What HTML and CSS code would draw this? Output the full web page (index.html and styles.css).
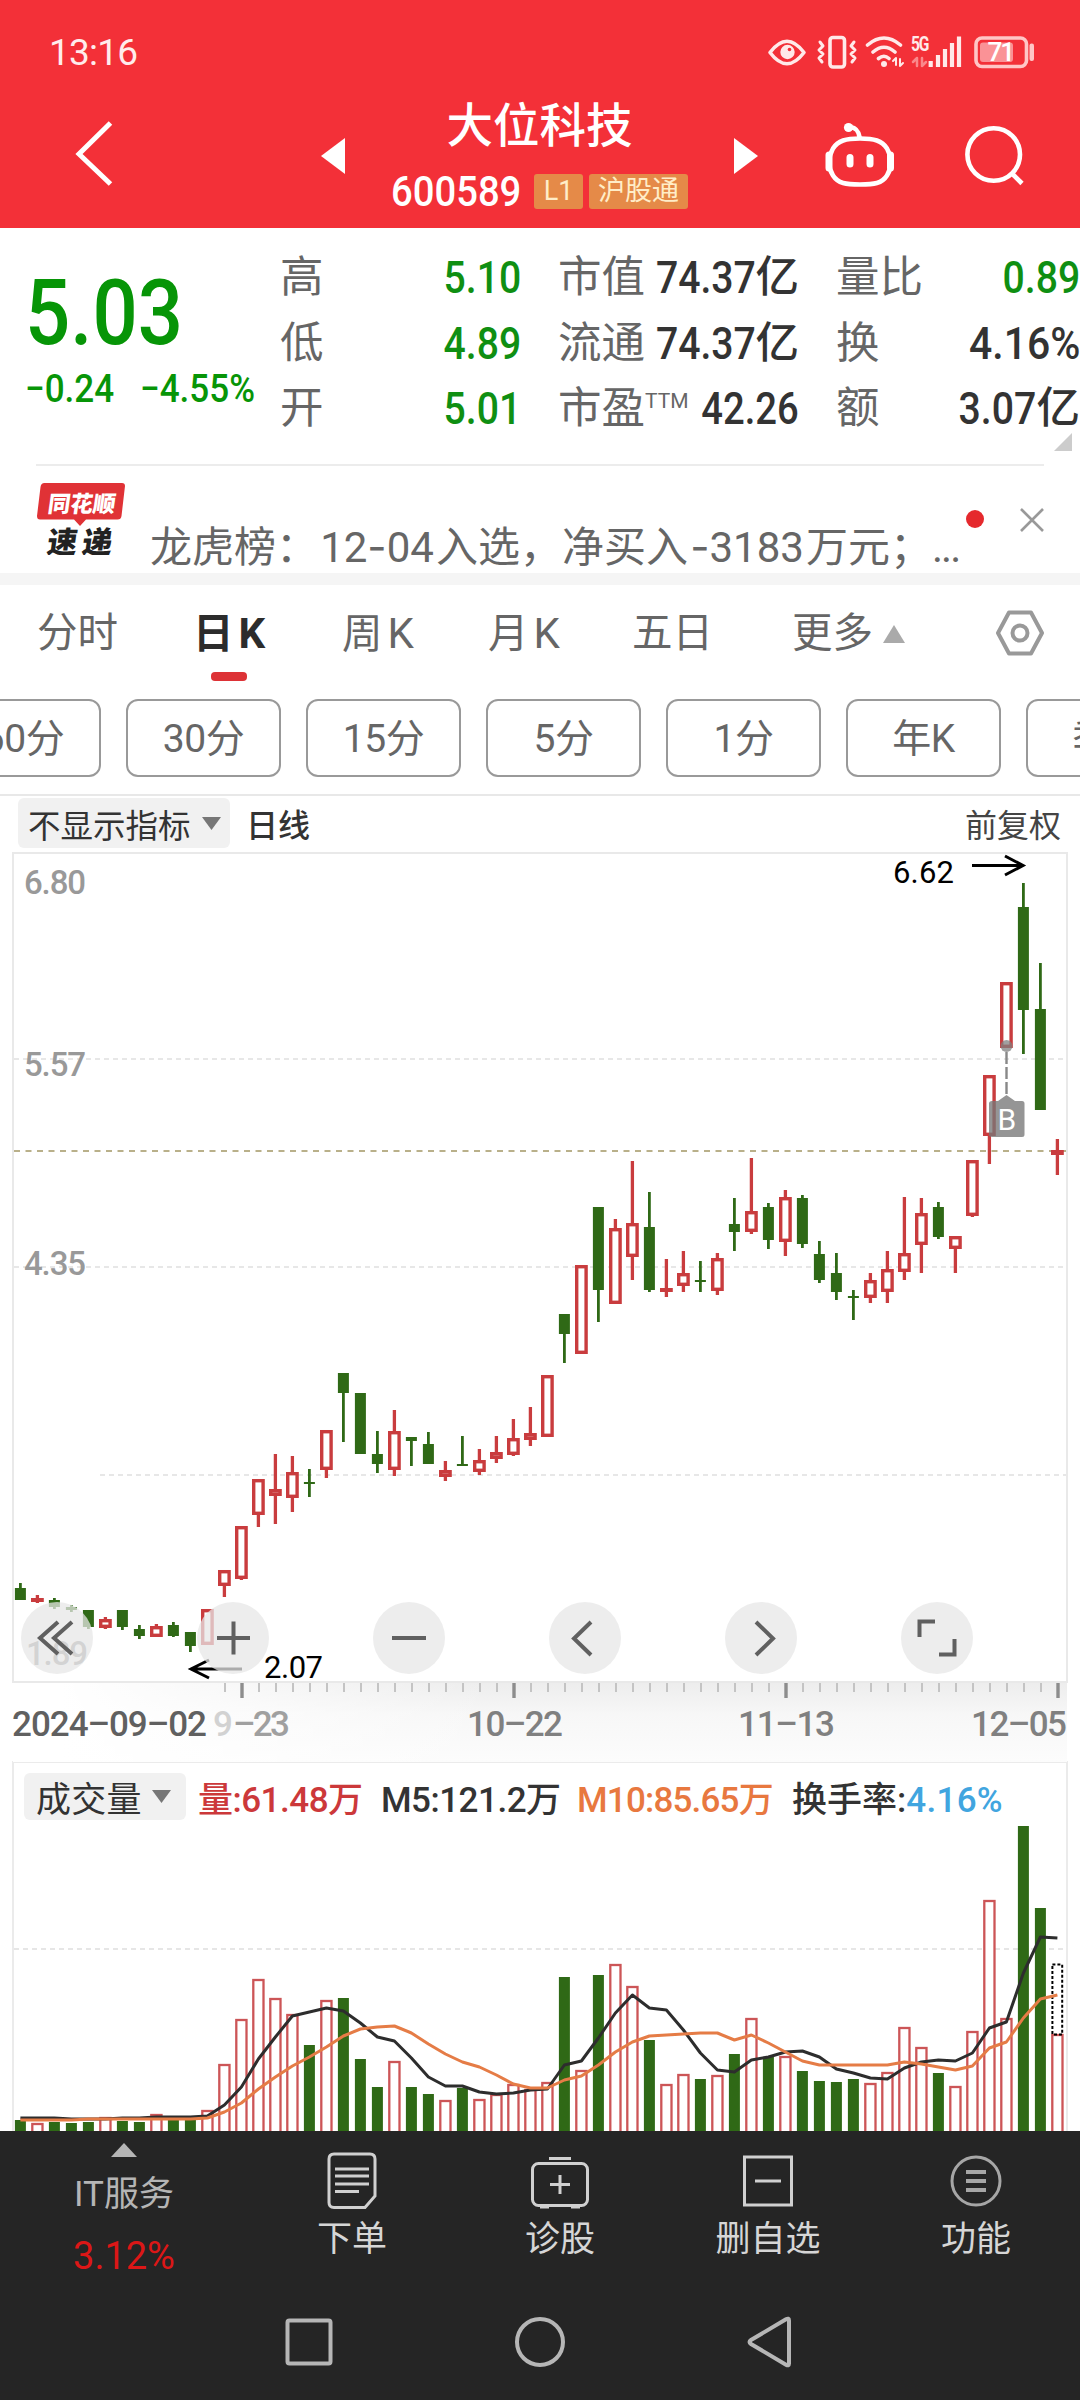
FILE: index.html
```html
<!DOCTYPE html>
<html lang="zh-CN">
<head>
<meta charset="utf-8">
<title>大位科技 600589</title>
<link rel="stylesheet" href="styles.css">
</head>
<body>
<header class="top">
  <div class="status">
    <span class="clock">13:16</span>
    <svg class="status-icons" width="300" height="44" viewBox="760 30 300 44" fill="none" stroke="#ffe9e9" stroke-width="3.6" stroke-linecap="round" stroke-linejoin="round">
      <path d="M770 52.500Q787 30 804 52.500Q787 75 770 52.500Z"/>
      <circle cx="787.500" cy="52" r="7.200" fill="#ffe9e9" stroke="none"/><circle cx="789.500" cy="49.500" r="1.800" fill="#f33038" stroke="none"/>
      <rect x="830" y="37.500" width="14.500" height="29.500" rx="3"/>
      <path stroke-width="3" d="M820 42l3 4-4 4 4 4-4 4 3 4M854 42l-3 4 4 4-4 4 4 4-3 4"/>
      <path d="M867.500 45Q884 31 900.500 45M873 52Q884 42.500 895 52M878.500 58.500Q884 54 889 58.500"/>
      <circle cx="884" cy="64" r="3" fill="#ffe9e9" stroke="none"/>
      <path d="M896 58v7m-3-4 3-3M900 66v-7m3 4-3 3" stroke-width="2"/>
      <path d="M917 58v8m-4-4 4-4M922 66v-8m4 4-4 4" stroke-width="2.500" stroke="#f9888b"/>
      <text x="911" y="51" class="net">5G</text>
      <path stroke-width="4.200" stroke-linecap="butt" d="M930.700 67v-6M938 67V55M945 67V49M952 67V43M959 67V36.500"/>
      <rect x="976" y="38" width="50.500" height="28.500" rx="6" stroke="#ffc6c6"/>
      <rect x="980" y="42.500" width="33" height="19.500" rx="3" fill="#fa9296" stroke="none"/>
      <rect x="1029.500" y="43.500" width="4.500" height="17.500" rx="2" fill="#ffc6c6" stroke="none"/>
      <text x="987.500" y="61.200" class="battery">71</text>
    </svg>
  </div>
  <div class="titlebar">
    <svg width="60" height="80" viewBox="64 114 60 80" fill="none" stroke="#fff" stroke-width="5"><path d="M110.500 123 79 154 110.500 184"/></svg>
    <svg class="prev" width="24" height="36" viewBox="0 0 24 36" fill="#fff"><path d="M24 0v36L0 18z"/></svg>
    <div class="name">
      <h1>大位科技</h1>
      <div class="code"><span class="code-num">600589</span><span class="tag">L1</span><span class="tag wide">沪股通</span></div>
    </div>
    <svg class="next" width="24" height="36" viewBox="0 0 24 36" fill="#fff"><path d="M0 0v36l24-18z"/></svg>
    <svg class="actions" width="220" height="80" viewBox="820 114 220 80" fill="none" stroke="#fff" stroke-width="4.600" stroke-linecap="round">
      <path d="M861 138.500c14 0 22 2 27 10 5 9 5 19 0 27-5 8-13 9-27 9s-22-1-27-9c-5-8-5-18 0-27 5-8 13-10 27-10Z"/>
      <path d="M860.500 137c-1-6-3-9-9-10"/><circle cx="849.500" cy="127.500" r="4.600" fill="#fff" stroke="none"/>
      <path d="M830 155v13M891.500 155v13" stroke-width="7"/>
      <path d="M851 157.500v6.500M871 157.500v6.500" stroke-width="7"/>
      <circle cx="994.700" cy="154.500" r="26.300"/><path d="M1013 173.500l10 10" stroke-linecap="butt"/>
    </svg>
  </div>
</header>

<section class="quote">
  <div class="last">
    <strong>5.03</strong>
    <div class="change"><span>−0.24</span><span>−4.55%</span></div>
  </div>
  <dl class="stats">
    <dt>高</dt><dd class="down"><i>5.10</i></dd><dt>市值</dt><dd><i>74.37</i>亿</dd><dt>量比</dt><dd class="down"><i>0.89</i></dd>
    <dt>低</dt><dd class="down"><i>4.89</i></dd><dt>流通</dt><dd><i>74.37</i>亿</dd><dt>换</dt><dd><i class="pct">4.16%</i></dd>
    <dt>开</dt><dd class="down"><i>5.01</i></dd><dt>市盈<sup>TTM</sup></dt><dd><i class="pe">42.26</i></dd><dt>额</dt><dd><i>3.07</i>亿</dd>
  </dl>
  <span class="corner"></span>
</section>

<section class="news">
  <svg width="94" height="74" viewBox="34 481 94 74">
    <path d="M44.500 483H122q3 0 3 3l-3.500 30q-.5 3.500-4 3.500H86L80 526l-6-6.500H40q-3 0-3-3.500l3.500-29q.5-4 4-4Z" fill="#e03236"/>
    <text class="logo-a" transform="translate(47 511.500) skewX(-8)">同花顺</text>
    <text class="logo-b" transform="translate(46 552.500) skewX(-8)">速</text>
    <text class="logo-b" transform="translate(81 552.500) skewX(-8)">递</text>
  </svg>
  <p>龙虎榜：<span class="lat">12<b>-</b>04</span>入选，净买入<span class="lat neg"><b>-</b>3183</span>万元；<span class="dots">...</span></p>
  <span class="dot"></span>
  <svg class="close" width="24" height="24" viewBox="0 0 24 24" stroke="#999" stroke-width="2.600"><path d="M1 1l22 22M23 1 1 23"/></svg>
</section>

<nav class="tabs">
  <span>分时</span><span class="on">日<em>K</em></span><span>周<em>K</em></span><span>月<em>K</em></span><span>五日</span>
  <span class="more">更多<svg width="22" height="18" viewBox="0 0 22 18" fill="#aaa"><path d="M11 0 22 18H0z"/></svg></span>
  <svg class="gear" width="50" height="48" viewBox="0 0 50 48" fill="none" stroke="#999" stroke-width="4" stroke-linejoin="round"><path d="M14 3.500h22L47 24 36 44.500H14L3 24Z"/><circle cx="25" cy="24" r="7.500"/></svg>
</nav>

<div class="periods">
  <span>60分</span><span>30分</span><span>15分</span><span>5分</span><span>1分</span><span>年K</span><span>季K</span>
</div>

<div class="toolbar">
  <span class="chip">不显示指标<svg width="19" height="13" viewBox="0 0 19 13" fill="#777"><path d="M0 0h19L9.500 13z"/></svg></span>
  <span class="line">日线</span>
  <span class="adjust">前复权</span>
</div>

<section class="price">
  <svg id="candles" width="1080" height="912" viewBox="0 850 1080 912">
    <defs>
      <linearGradient id="axisFade" x1="0" x2="0" y1="0" y2="1"><stop offset="0" stop-color="#ededed"/><stop offset=".4" stop-color="#f7f7f7"/><stop offset="1" stop-color="#fcfcfc"/></linearGradient>
      <linearGradient id="axisLeft" x1="0" x2="1" y1="0" y2="0"><stop offset="0" stop-color="#fff"/><stop offset=".1" stop-color="#fff"/><stop offset="1" stop-color="#fff" stop-opacity="0"/></linearGradient>
    </defs>
    <rect x="13" y="1683" width="1054" height="79" fill="url(#axisFade)"/>
    <rect x="13" y="1683" width="480" height="79" fill="url(#axisLeft)"/>
    <rect x="13" y="853" width="1054" height="829" fill="none" stroke="#e9e9e9" stroke-width="2"/>
    <g stroke="#e0e0e0" stroke-width="1.500" stroke-dasharray="5 4"><path d="M14 1059H1066M14 1267H1066M100 1475H1066"/></g>
    <path d="M14 1151H1066" stroke="#b9b08a" stroke-width="2" stroke-dasharray="6 5.500"/>
    <g class="scale"><text x="24" y="894" textLength="62">6.80</text><text x="24" y="1076" textLength="62">5.57</text><text x="24" y="1275" textLength="62">4.35</text><text x="26" y="1665" textLength="62">1.89</text></g>
    <g id="ticks"></g>
    <g id="bodies"></g>
    <g stroke="#000" stroke-width="3" fill="none"><path d="M972 865.500h50M1005 856l18 9.500-18 9.500M242 1669h-50M209 1660l-18 9 18 9"/></g>
    <g class="mark"><text x="893" y="883" textLength="61">6.62</text><text x="264" y="1678" textLength="59">2.07</text></g>
    <circle cx="1006.500" cy="1046" r="6" fill="#808080" fill-opacity=".75"/>
    <path d="M1006.500 1052v44" stroke="#888" stroke-width="2.400" stroke-dasharray="12 3"/>
    <path d="M992 1101h6l8.500-6 8.500 6h7q2.500 0 2.500 2.500v31q0 2.500-2.500 2.500h-30q-3 0-3-2.500v-31q0-2.500 3-2.500Z" fill="#777" fill-opacity=".78"/>
    <text class="flag" x="997.500" y="1129.500">B</text>
    <g class="dates"><text x="12" y="1736" textLength="195">2024–09–02</text><text class="faded" x="213" y="1736">9</text><text x="233" y="1736" textLength="57" class="half">–23</text><text x="467" y="1736" textLength="96">10–22</text><text x="738" y="1736" textLength="97">11–13</text><text x="971" y="1736" textLength="96">12–05</text></g>
  </svg>
  <div class="controls">
    <button><svg viewBox="-36 -36 72 72"><path d="M1-16-17 0 1 16M15-16-3 0 15 16"/></svg></button>
    <button><svg viewBox="-36 -36 72 72"><path d="M-16 0h33M.500-16.500v33"/></svg></button>
    <button><svg viewBox="-36 -36 72 72"><path d="M-17 0h34"/></svg></button>
    <button><svg viewBox="-36 -36 72 72"><path d="M6-16-11 .500 6 17"/></svg></button>
    <button><svg viewBox="-36 -36 72 72"><path d="M-5-16 12 .500-5 17"/></svg></button>
    <button><svg viewBox="-36 -36 72 72"><path d="M-2-16.500h-15.500V-1M2 16.500h15.500V1"/></svg></button>
  </div>
</section>

<section class="volume">
  <div class="vol-head">
    <span class="chip">成交量<svg width="19" height="13" viewBox="0 0 19 13" fill="#777"><path d="M0 0h19L9.500 13z"/></svg></span>
    <span class="v">量:61.48万</span><span class="m5">M5:121.2万</span><span class="m10">M10:85.65万</span><span class="turn">换手率:<b>4.16%</b></span>
  </div>
  <svg id="volumes" width="1052" height="309" viewBox="14 1822 1052 309"></svg>
</section>

<footer class="bottom">
  <div class="actions-row">
    <div class="index"><svg width="26" height="14" viewBox="0 0 26 14" fill="#b5b5b5"><path d="M13 0 26 14H0z"/></svg><span>IT服务</span><span class="up">3.12%</span></div>
    <div class="act"><svg viewBox="-30 -30 60 60"><path d="M-18-27h36q5 0 5 5v37L13 26.500h-31q-5 0-5-5V-22q0-5 5-5Z"/><path d="M-17-12h34M-17-5h34M-17 3h34M-17 10.500H7"/></svg><span>下单</span></div>
    <div class="act"><svg viewBox="-30 -30 60 60"><rect x="-27.500" y="-17.500" width="55" height="42" rx="6"/><path d="M-11-22.500h22M-10 3.500h20M0-6v19M-20 26h9M11 26h9"/></svg><span>诊股</span></div>
    <div class="act"><svg viewBox="-30 -30 60 60"><rect x="-23.500" y="-24" width="47" height="48"/><path d="M-13 0h26"/></svg><span>删自选</span></div>
    <div class="act"><svg viewBox="-30 -30 60 60" class="dim"><circle r="24"/><path d="M-10-9h20M-10 0h20M-10 9h20" stroke-width="4"/></svg><span>功能</span></div>
  </div>
  <div class="sysnav">
    <svg viewBox="-30 -30 60 60"><rect x="-21.500" y="-21.500" width="43" height="43" rx="2"/></svg>
    <svg viewBox="-30 -30 60 60"><circle r="23"/></svg>
    <svg viewBox="-30 -30 60 60"><path d="M18-21.500v43q0 3-3 1.200L-20 2q-3-2 0-4L15-22.700q3-1.800 3 1.200Z"/></svg>
  </div>
</footer>
<script src="chart.js"></script>
</body>
</html>
```
FILE: styles.css
```css
* { box-sizing: border-box; }
body { margin: 0; width: 1080px; height: 2400px; overflow: hidden; background: #fff; color: #333; font-family: Roboto, "Noto Sans CJK SC", sans-serif; }
svg { display: block; flex: none; }
h1, p, dl, dt, dd { margin: 0; }

.top { height: 228px; background: #f33038; color: #fff; }
.status { height: 104px; padding: 0 20px 0 49px; display: flex; align-items: center; justify-content: space-between; }
.clock { font-size: 37px; letter-spacing: -.8px; color: #ffecec; }
.net { font: 700 20px Roboto, sans-serif; fill: #ffe9e9; stroke: none; letter-spacing: -1.5px; transform-box: fill-box; transform: scaleX(.78); }
.battery { font: 500 26px Roboto, sans-serif; fill: #fff; stroke: none; letter-spacing: -2px; }
.titlebar { display: flex; height: 124px; padding-left: 64px; }
.titlebar > svg:first-child { margin-top: 10px; }
.prev { margin: 34px 0 0 197px; }
.name { width: 389px; display: flex; flex-direction: column; align-items: center; }
.name h1 { font-size: 46.500px; line-height: 50px; font-weight: 500; margin-top: -3px; }
.code { display: flex; align-items: center; margin-top: 23px; height: 34px; }
.code-num { font-size: 42px; width: 136px; transform: scaleX(.91); transform-origin: left; font-weight: 500; margin-right: 7px; }
.tag { background: #e58a48; color: #ffedc8; border-radius: 3px; width: 49px; height: 35px; line-height: 35px; font-size: 27px; text-align: center; }
.tag.wide { width: 99px; margin-left: 6px; }
.next { margin: 34px 0 0 0; }
.actions { margin: 10px 0 0 61px; }

.quote { position: relative; display: flex; height: 238px; margin-bottom: -1px; }
.quote::after { content: ""; position: absolute; left: 36px; right: 36px; bottom: 0; height: 2px; background: #ececec; }
.last { width: 280px; padding-left: 25px; color: #079507; }
.last strong { display: block; font-weight: 500; font-size: 90px; line-height: 100px; margin-top: 36px; transform: scaleX(.885); transform-origin: left; }
.change { display: flex; font-size: 38.500px; line-height: 44px; font-weight: 500; margin-top: 3px; }
.change span { width: 115px; transform: scaleX(.91); transform-origin: left; white-space: nowrap; }
.stats { display: grid; grid-template-columns: 86px 155px 125px 153px 132px 149px; grid-auto-rows: 65.500px; padding-top: 17px; font-size: 43.500px; line-height: 65px; }
.stats dt { color: #666; white-space: nowrap; }
.stats dt:nth-of-type(3n+2), .stats dt:nth-of-type(3n) { margin-left: 37px; }
.stats dd { display: flex; justify-content: flex-end; color: #333; font-weight: 500; }
.stats i { font-style: normal; font-size: 45px; transform: scaleX(.87); transform-origin: right; }
.stats i.pct { transform: scaleX(.91); }
.stats i.pe { transform: scaleX(.85); }
.stats dd.down { color: #0f8f12; }
.stats sup { font-size: 21px; line-height: 0; vertical-align: 15px; }
.corner { position: absolute; right: 8px; top: 205px; border-left: 18px solid transparent; border-bottom: 18px solid #ccc; }

.news { height: 108px; padding: 16px 36px 0 34px; display: flex; }
.logo-a { font: 900 22.500px "Noto Sans CJK SC", sans-serif; fill: #fff; }
.logo-b { font: 900 30px "Noto Sans CJK SC", sans-serif; fill: #222; }
.news p { margin: 41px 0 0 22px; width: 812px; font-size: 42px; line-height: 52px; color: #666; white-space: nowrap; display: flex; }
.lat { display: inline-block; width: 118px; text-align: center; }
.lat b { font: 400 42px Inter, sans-serif; line-height: 1; }
.dots { letter-spacing: -2px; }
.dot { width: 18px; height: 18px; border-radius: 50%; background: #e5292d; margin: 29px 0 0 4px; }
.close { margin: 27px 0 0 36px; }

.tabs { height: 126px; border-top: 12px solid #f5f5f5; padding: 0 36px 0 37px; display: grid; grid-template-columns: 156px 149px 146px 144px 160px 203px 50px; color: #666; font-size: 40.500px; line-height: 97px; }
.tabs em { font-style: normal; font-size: 42px; margin-left: 5px; }
.tabs .on { position: relative; color: #2c2c2c; font-weight: 700; }
.tabs .on::after { content: ""; position: absolute; left: 18px; top: 87px; width: 36px; height: 9px; border-radius: 4px; background: #dd3236; }
.more { display: flex; align-items: center; height: 97px; gap: 10px; }
.gear { margin-top: 24px; }

.periods { display: flex; gap: 25px; padding-left: 0; justify-content: flex-start; width: 1080px; height: 97px; overflow: hidden; color: #666; font-size: 39px; border-bottom: 2px solid #e8e8e8; }
.periods span { width: 155px; height: 78px; line-height: 76px; border: 2px solid #999; border-radius: 12px; text-align: center; flex: none; letter-spacing: -.5px; }
.periods span:first-child { margin-left: -54px; }

.toolbar { height: 54px; display: flex; align-items: center; padding: 0 19px 0 18px; font-size: 32.500px; }
.chip { display: flex; align-items: center; background: #f1f1f1; border-radius: 6px; }
.toolbar .chip { height: 50px; width: 212px; padding-left: 10px; gap: 11px; }
.line { margin-left: 16px; font-size: 32px; font-weight: 500; }
.adjust { margin-left: auto; font-size: 32px; color: #444; }

.price { position: relative; height: 912px; }
.scale { font-size: 33px; fill: #999; font-weight: 500; }
.mark { font-size: 31px; fill: #000; }
.flag { font-size: 30px; fill: #fff; }
.dates { font-size: 35px; fill: #808080; font-weight: 500; }
.dates text:first-child { fill: #606060; }
.dates .faded { fill: #d2d2d2; }
.dates .half { fill: #a0a0a0; }
.controls { position: absolute; left: 21px; top: 752px; display: flex; gap: 104px; }
.controls button { width: 72px; height: 72px; padding: 0; border: 0; border-radius: 50%; background: rgba(231, 231, 231, .74); }
.controls svg { width: 72px; height: 72px; fill: none; stroke: #606060; stroke-width: 4; }

.volume { height: 370px; margin: -1px 12px 0; border: 2px solid #ebebeb; border-bottom: 0; }
.vol-head { height: 59px; padding: 10px 0 2px 10px; display: flex; align-items: center; font-size: 35px; white-space: nowrap; letter-spacing: -.5px; }
.vol-head span { flex: none; }
.vol-head .chip { width: 162px; height: 47px; padding-left: 12px; gap: 10px; letter-spacing: .3px; }
.v { width: 183px; margin-left: 12px; color: #cc383a; }
.m5 { width: 196px; }
.m10 { width: 215px; color: #e8783f; letter-spacing: -.8px; }
.turn { letter-spacing: 0; }
.turn b { color: #41a5df; letter-spacing: .3px; }
.v, .m5, .m10, .turn, .turn b { font-weight: 500; }

.bottom { height: 269px; background: #252525; color: #d6d6d6; }
.actions-row { height: 158px; display: grid; grid-template-columns: 248px repeat(4, 208px); font-size: 35px; }
.index { display: flex; flex-direction: column; align-items: center; padding-top: 12px; line-height: 50px; color: #b5b5b5; }
.index span { margin-top: 13px; }
.index .up { color: #dc1717; font-size: 38px; margin-top: 11px; }
.act { display: flex; flex-direction: column; align-items: center; padding-top: 20px; line-height: 50px; }
.act svg { width: 60px; height: 60px; fill: none; stroke: #d0d0d0; stroke-width: 3; }
.act svg.dim { stroke: #a6a6a6; }
.act span { margin-top: 4px; }
.sysnav { display: flex; padding: 23px 0 0 279px; gap: 171px; }
.sysnav svg { width: 60px; height: 60px; fill: none; stroke: #b6b6b6; stroke-width: 4; }
```
FILE: chart.js
```js
// Daily bars: direction, high, body top, body bottom, low, volume top (all in plot units).
const days = [
["g",1583,1588,1600,1600,2120],["r",1595,1598,1602,1603,2123],["g",1598,1600,1607,1609,2122],["g",1605,1607,1610,1612,2123],
["g",1610,1610,1627,1629,2122],["r",1617,1619,1628,1629,2117],["g",1610,1610,1627,1630,2121],["g",1625,1629,1636,1639,2122],
["r",1624,1626,1637,1637,2114],["g",1622,1625,1636,1637,2119],["g",1632,1632,1646,1652,2119],["r",1609,1609,1645,1645,2110],
["r",1570,1570,1586,1597,2064],["r",1526,1526,1579,1580,2019],["r",1479,1479,1515,1527,1979],["r",1454,1489,1496,1524,1998],
["r",1456,1472,1498,1512,2014],["g",1469,1482,1484,1497,2045],["r",1430,1430,1470,1478,2000],["g",1373,1373,1393,1442,1998],
["g",1393,1393,1454,1454,2059],["g",1431,1454,1464,1473,2087],["r",1410,1431,1470,1476,2061],["g",1437,1437,1441,1466,2087],
["g",1432,1444,1464,1464,2094],["r",1461,1470,1477,1481,2100],["g",1436,1464,1466,1466,2088],["r",1449,1460,1472,1475,2099],
["r",1436,1452,1459,1463,2094],["r",1419,1438,1455,1456,2084],["r",1407,1433,1440,1446,2089],["r",1375,1375,1437,1437,2082],
["g",1314,1314,1334,1363,1977],["r",1265,1265,1354,1354,2070],["g",1207,1207,1290,1322,1975],["r",1219,1228,1304,1304,1964],
["r",1161,1223,1257,1280,1986],["g",1192,1227,1290,1292,2040],["r",1259,1288,1292,1297,2084],["r",1251,1273,1286,1292,2074],
["g",1261,1280,1282,1292,2079],["r",1253,1258,1291,1295,2075],["g",1198,1224,1232,1251,2054],["r",1158,1211,1232,1234,2018],
["g",1203,1207,1240,1249,2057],["r",1190,1197,1242,1256,2056],["g",1195,1198,1244,1248,2071],["g",1241,1254,1280,1283,2081],
["g",1253,1273,1292,1300,2082],["g",1290,1296,1298,1320,2079],["r",1273,1280,1298,1303,2083],["r",1251,1269,1292,1303,2072],
["r",1197,1253,1272,1280,2027],["r",1198,1213,1245,1273,2047],["g",1202,1207,1237,1239,2073],["r",1236,1236,1249,1273,2086],
["r",1160,1160,1216,1217,2031],["r",1075,1075,1136,1164,1900],["r",982,982,1048,1048,2018],["g",883,907,1010,1054,1826],
["g",963,1009,1110,1110,1908],["r",1139,1150,1155,1175,2034]];
const ma5 = [2118,2118,2118,2119,2119,2119,2118,2118,2117,2117,2117,2116,2105,2087,2059,2037,2016,2012,2008,2011,2023,2037,2041,2058,2077,2086,2086,2092,2094,2093,2090,2089,2065,2061,2038,2013,1995,2008,2010,2030,2053,2070,2072,2060,2057,2052,2051,2057,2069,2073,2078,2079,2068,2062,2060,2061,2053,2028,2022,1973,1937,1938];
const ma10 = [2120,2120,2120,2120,2119,2119,2119,2119,2119,2119,2119,2118,2112,2103,2089,2077,2066,2057,2047,2036,2029,2027,2026,2033,2044,2054,2062,2067,2075,2084,2088,2088,2080,2076,2065,2052,2042,2036,2035,2034,2033,2033,2040,2035,2043,2052,2061,2065,2065,2065,2065,2065,2062,2064,2067,2070,2066,2048,2042,2018,1999,1995];

const X = i => 20.4 + 17 * i;
const UP = "#c93c3e", DOWN = "#2f6916";

document.getElementById("bodies").innerHTML = days.map(([d, hi, top, bot, lo], i) => {
  const x = X(i);
  if (d === "g")
    return `<path d="M${x} ${hi}V${lo}" stroke="${DOWN}" stroke-width="2.8"/><rect x="${x - 5.5}" y="${top}" width="11" height="${bot - top}" fill="${DOWN}"/>`;
  const h = Math.max(bot - top - 3.4, 0.5);
  return `<path d="M${x} ${hi}V${top + 1}M${x} ${bot - 1}V${lo}" stroke="${UP}" stroke-width="3.3"/><rect x="${x - 4.7}" y="${top + 1.7}" width="9.4" height="${h}" fill="#fff" stroke="${UP}" stroke-width="3.4"/>`;
}).join("");

document.getElementById("ticks").innerHTML = days.map((_, i) => {
  if (i < 12) return "";
  const major = (i - 13) % 16 === 0;
  return `<path d="M${X(i) + 0.6} 1683V${major ? 1698 : 1692}" stroke="${major ? "#8d8d8d" : "#c4c4c4"}" stroke-width="${major ? 3.4 : 2}"/>`;
}).join("");

const line = (ys, c) => `<polyline fill="none" stroke="${c}" stroke-width="3" stroke-linejoin="round" points="${ys.map((y, i) => X(i) + "," + y).join(" ")}"/>`;
document.getElementById("volumes").innerHTML =
  `<path d="M14 1949H1066" stroke="#dedede" stroke-width="1.5" stroke-dasharray="5 4"/>` +
  days.map(([d, , , , , v], i) => d === "g"
    ? `<rect x="${X(i) - 5.5}" y="${v}" width="11" height="${2131 - v}" fill="${DOWN}"/>`
    : `<rect x="${X(i) - 5.1}" y="${v + 1}" width="10.2" height="${2140 - v}" fill="#fff" stroke="#cc5557" stroke-width="2.3"/>`).join("") +
  `<rect x="1052.400" y="1964.500" width="9.800" height="70" fill="none" stroke="#000" stroke-width="2" stroke-dasharray="3 2"/>` +
  line(ma5, "#2d2d2d") + line(ma10, "#e57c46");
```
